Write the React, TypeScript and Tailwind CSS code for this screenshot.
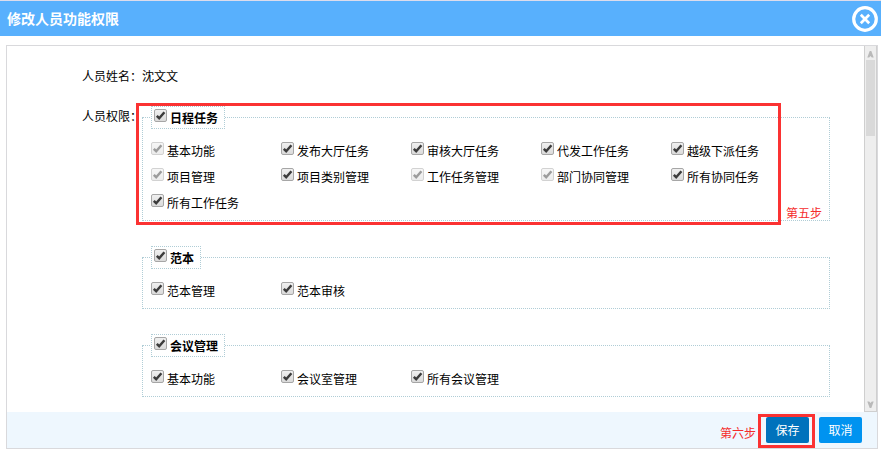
import React, { useState } from 'react';

type Permission = { name: string; locked?: boolean };
type Group = { title: string; items: Permission[]; step?: string };

const groups: Group[] = [
    {
        title: '日程任务',
        step: '第五步',
        items: [
            { name: '基本功能', locked: true },
            { name: '发布大厅任务' },
            { name: '审核大厅任务' },
            { name: '代发工作任务' },
            { name: '越级下派任务' },
            { name: '项目管理', locked: true },
            { name: '项目类别管理' },
            { name: '工作任务管理', locked: true },
            { name: '部门协同管理', locked: true },
            { name: '所有协同任务' },
            { name: '所有工作任务' },
        ],
    },
    { title: '范本', items: [{ name: '范本管理' }, { name: '范本审核' }] },
    { title: '会议管理', items: [{ name: '基本功能' }, { name: '会议室管理' }, { name: '所有会议管理' }] },
];

const CheckBox: React.FC<{ label: string; locked?: boolean }> = ({ label, locked }) => {
    const [checked, setChecked] = useState(true);

    return (
        <label className="flex items-start gap-[3px] whitespace-nowrap">
            <span className={`relative block size-[13px] shrink-0 ${locked ? 'opacity-50' : ''}`}>
                <input
                    type="checkbox"
                    checked={checked}
                    disabled={locked}
                    onChange={(e) => setChecked(e.target.checked)}
                    className="block size-[13px] appearance-none rounded-[2px] border border-[#a6a6a6] bg-linear-to-b from-[#f0f0f0] to-[#dadada]"
                />
                {checked && (
                    <svg viewBox="0 0 13 13" className="pointer-events-none absolute inset-0 size-[13px]">
                        <path d="M2.8 6.8 5.2 9.2 10.4 3.2" fill="none" stroke="#3c3c3c" strokeWidth="2.5" />
                    </svg>
                )}
            </span>
            <span className="pt-px">{label}</span>
        </label>
    );
};

const PermissionGroup: React.FC<{ group: Group }> = ({ group }) => (
    <div className="relative">
        <fieldset className="min-w-0 border border-dotted border-[#b0cdd6] px-2 pb-1">
            <legend className="border border-dotted border-[#b0cdd6] pt-0.5 pr-[6px] pl-0.5 font-bold">
                <CheckBox label={group.title} />
            </legend>
            <div className="grid grid-cols-[repeat(auto-fill,130px)] pt-[9px]">
                {group.items.map((item) => (
                    <div key={item.name} className="h-[26px] pt-1">
                        <CheckBox label={item.name} locked={item.locked} />
                    </div>
                ))}
            </div>
        </fieldset>
        {group.step && (
            <>
                <div className="pointer-events-none absolute -top-[3px] right-[49px] -bottom-1 -left-[6px] border-3 border-[#fb3232]" />
                <span className="absolute right-2 -bottom-0.5 text-[#f52c2c]">{group.step}</span>
            </>
        )}
    </div>
);

export default function App() {
    return (
        <div className="flex h-screen flex-col bg-white font-['Liberation_Sans','Noto_Sans_CJK_SC',sans-serif] text-[12px] leading-[18px] text-black">
            <header className="flex h-9 shrink-0 items-center justify-between border-t border-[#dcdcec] bg-[#58b0fd] pr-[3px] pl-[7px]">
                <h1 className="text-[14px] font-bold text-white">修改人员功能权限</h1>
                <button type="button" aria-label="关闭">
                    <svg viewBox="0 0 26 26" className="block size-[26px]" fill="none" stroke="#fff">
                        <circle cx="13" cy="13" r="11.3" strokeWidth="3.2" />
                        <path d="m8.8 8.8 8.4 8.4m0-8.4-8.4 8.4" strokeWidth="2.7" />
                    </svg>
                </button>
            </header>

            <main className="mt-[9px] mr-[3px] mb-px ml-[6px] flex min-h-0 flex-1 flex-col border border-[#d9d9dc]">
                <div className="flex min-h-0 flex-1">
                    <div className="min-w-0 flex-1 overflow-y-auto pt-[22px] pr-[34px] [scrollbar-width:none]">
                        <div className="flex">
                            <span className="w-[135px] shrink-0 text-right">人员姓名：</span>
                            <span>沈文文</span>
                        </div>
                        <div className="mt-5 flex">
                            <span className="w-[135px] shrink-0 pt-0.5 text-right">人员权限：</span>
                            <div className="flex min-w-0 flex-1 flex-col gap-[25px]">
                                {groups.map((group) => (
                                    <PermissionGroup key={group.title} group={group} />
                                ))}
                            </div>
                        </div>
                    </div>

                    <div className="flex w-[13px] shrink-0 flex-col items-center border border-t-0 border-[#cfcfcf] bg-[#eeeeee]">
                        <svg viewBox="0 0 11 14" className="h-[14px] w-[11px] shrink-0">
                            <path d="M4.7 5H6.3L8.7 11.5H6.8L5.5 10 4.2 11.5H2.3Z" fill="#b9b9b9" />
                        </svg>
                        <div className="h-[76px] w-[9px] shrink-0 bg-[#d9d9d9]" />
                        <svg viewBox="0 0 11 14" className="mt-auto h-[14px] w-[11px] shrink-0">
                            <path d="M4.7 11H6.3L8.7 4.5H6.8L5.5 6 4.2 4.5H2.3Z" fill="#b9b9b9" />
                        </svg>
                    </div>
                </div>

                <footer className="flex h-9 shrink-0 items-start justify-end bg-[#eef7fe] pt-[5px] pr-[15px]">
                    <span className="mt-2 mr-[10px] text-[#f52c2c]">第六步</span>
                    <div className="relative mr-[10px]">
                        <button type="button" className="block h-[26px] w-[43px] rounded-[2px] bg-[#0072bc] pt-0.5 text-white">保存</button>
                        <div className="pointer-events-none absolute -top-[3px] -right-[6px] -bottom-[5px] -left-[8px] border-3 border-[#fb3232]" />
                    </div>
                    <button type="button" className="block h-[26px] w-[43px] rounded-[2px] bg-[#0093f0] pt-0.5 text-white">取消</button>
                </footer>
            </main>
        </div>
    );
}
